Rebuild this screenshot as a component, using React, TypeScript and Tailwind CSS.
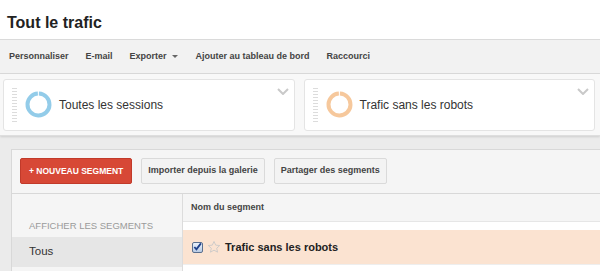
import React from 'react'

const font = { fontFamily: '"Liberation Sans", Arial, sans-serif' }

function Handle() {
  return (
    <svg width="5" height="36" viewBox="0 0 5 36" className="shrink-0">
      {Array.from({ length: 12 }).map((_, i) => (
        <rect key={i} x="0" y={i * 3} width="5" height="1" fill="#dcdcdc" />
      ))}
    </svg>
  )
}

function Donut({ color }: { color: string }) {
  // ring with a small notch at the top
  const r = 11
  const c = 2 * Math.PI * r
  return (
    <svg width="27" height="27" viewBox="0 0 27 27" className="shrink-0">
      <circle
        cx="13.5"
        cy="13.5"
        r={r}
        fill="none"
        stroke={color}
        strokeWidth="4"
        strokeDasharray={`${c - 1.5} 1.5`}
        transform="rotate(-88 13.5 13.5)"
      />
    </svg>
  )
}

function Chevron() {
  return (
    <svg width="12" height="7" viewBox="0 0 12 7">
      <path d="M1 1l5 5 5-5" fill="none" stroke="#c9c9c9" strokeWidth="2" />
    </svg>
  )
}

function SegmentCard({ label, color }: { label: string; color: string }) {
  return (
    <div className="flex-1 h-[52px] rounded-[3px] border border-[#e4e4e4] bg-white flex items-start relative">
      <div className="pl-[8px] pt-[8px]">
        <Handle />
      </div>
      <div className="flex items-center h-full pl-[8px] gap-[7px] pb-[1px]">
        <Donut color={color} />
        <span className="text-[12px] text-[#333]">{label}</span>
      </div>
      <div className="absolute right-[5px] top-[8px]">
        <Chevron />
      </div>
    </div>
  )
}

function Star() {
  return (
    <svg width="14" height="14" viewBox="0 0 24 24">
      <path
        d="M12 2.5l2.9 6.3 6.9.7-5.2 4.6 1.5 6.8L12 17.4l-6.1 3.5 1.5-6.8L2.2 9.5l6.9-.7z"
        fill="none"
        stroke="#c8c8c8"
        strokeWidth="1.5"
        strokeLinejoin="round"
      />
    </svg>
  )
}

function Checkbox() {
  return (
    <div className="w-[11px] h-[11px] rounded-[2px] border border-[#5a6f8e] bg-gradient-to-b from-[#eaf1fb] to-[#b9cbe4] flex items-center justify-center shrink-0">
      <svg width="10" height="10" viewBox="0 0 10 10">
        <path d="M1.5 5l2.3 2.6L8.8 1" fill="none" stroke="#1d3f8a" strokeWidth="2" />
      </svg>
    </div>
  )
}

export default function App() {
  return (
    <div className="w-[600px] h-[271px] overflow-hidden bg-white" style={font}>
      {/* Title */}
      <div className="h-[39px] flex items-center pl-[7px] pt-[6px]">
        <h1 className="text-[16px] font-bold text-[#222]">Tout le trafic</h1>
      </div>

      {/* Toolbar */}
      <div className="h-[35px] border-y border-[#dadada] bg-[#f2f2f2] flex items-center pl-[9px] gap-[17px] text-[9px] font-bold text-[#444]">
        <span>Personnaliser</span>
        <span>E-mail</span>
        <span className="flex items-center gap-[5px]">
          Exporter
          <span className="w-0 h-0 border-x-[3px] border-x-transparent border-t-[3px] border-t-[#666]" />
        </span>
        <span className="ml-[1px]">Ajouter au tableau de bord</span>
        <span>Raccourci</span>
      </div>

      <div className="bg-[#ebebeb]">
        {/* Segment cards */}
        <div className="bg-[#f8f8f8] pt-[5px] pb-[4px] pl-[3px] pr-[5px] flex gap-[9px] shadow-[0_1px_2px_rgba(0,0,0,0.12)] border-b border-[#dedede]">
          <SegmentCard label="Toutes les sessions" color="#93cce9" />
          <SegmentCard label="Trafic sans les robots" color="#f6c89c" />
        </div>

        {/* Segment panel */}
        <div className="ml-[11px] mt-[13px] border-l border-t border-[#d8d8d8] bg-[#f5f5f5]">
          <div className="flex items-center gap-[9px] pl-[8px] pt-[8px] pb-[9px] border-b border-[#d8d8d8]">
            <button className="h-[26px] px-[8px] rounded-[2px] bg-[#d74836] border border-[#c13a2a] text-white text-[8.5px] font-bold">
              + NOUVEAU SEGMENT
            </button>
            <button className="h-[26px] px-[6px] rounded-[2px] bg-[#f3f3f3] border border-[#dadada] text-[#444] text-[9px] font-bold">
              Importer depuis la galerie
            </button>
            <button className="h-[26px] px-[6px] rounded-[2px] bg-[#f3f3f3] border border-[#dadada] text-[#444] text-[9px] font-bold">
              Partager des segments
            </button>
          </div>

          <div className="flex h-[80px]">
            {/* Left column */}
            <div className="w-[171px] border-r border-[#dcdcdc] pt-[26px]">
              <div className="pl-[17px] text-[9.5px] leading-[11px] text-[#9a9a9a] uppercase">Afficher les segments</div>
              <div className="mt-[6px] h-[30px] bg-[#e6e6e6] flex items-center pl-[17px] text-[11.5px] text-[#333]">Tous</div>
            </div>

            {/* Right column */}
            <div className="flex-1 bg-white">
              <div className="h-[28px] bg-[#f5f5f5] border-b border-[#e6e6e6] flex items-center pl-[8px] text-[9px] font-bold text-[#444]">
                Nom du segment
              </div>
              <div className="mt-[8px] h-[35px] bg-[#fbe3d1] border-b border-[#eee] flex items-center pl-[9px]">
                <Checkbox />
                <span className="ml-[4px]">
                  <Star />
                </span>
                <span className="ml-[4px] text-[11px] font-bold text-[#222]">Trafic sans les robots</span>
              </div>
            </div>
          </div>
        </div>
      </div>
    </div>
  )
}
